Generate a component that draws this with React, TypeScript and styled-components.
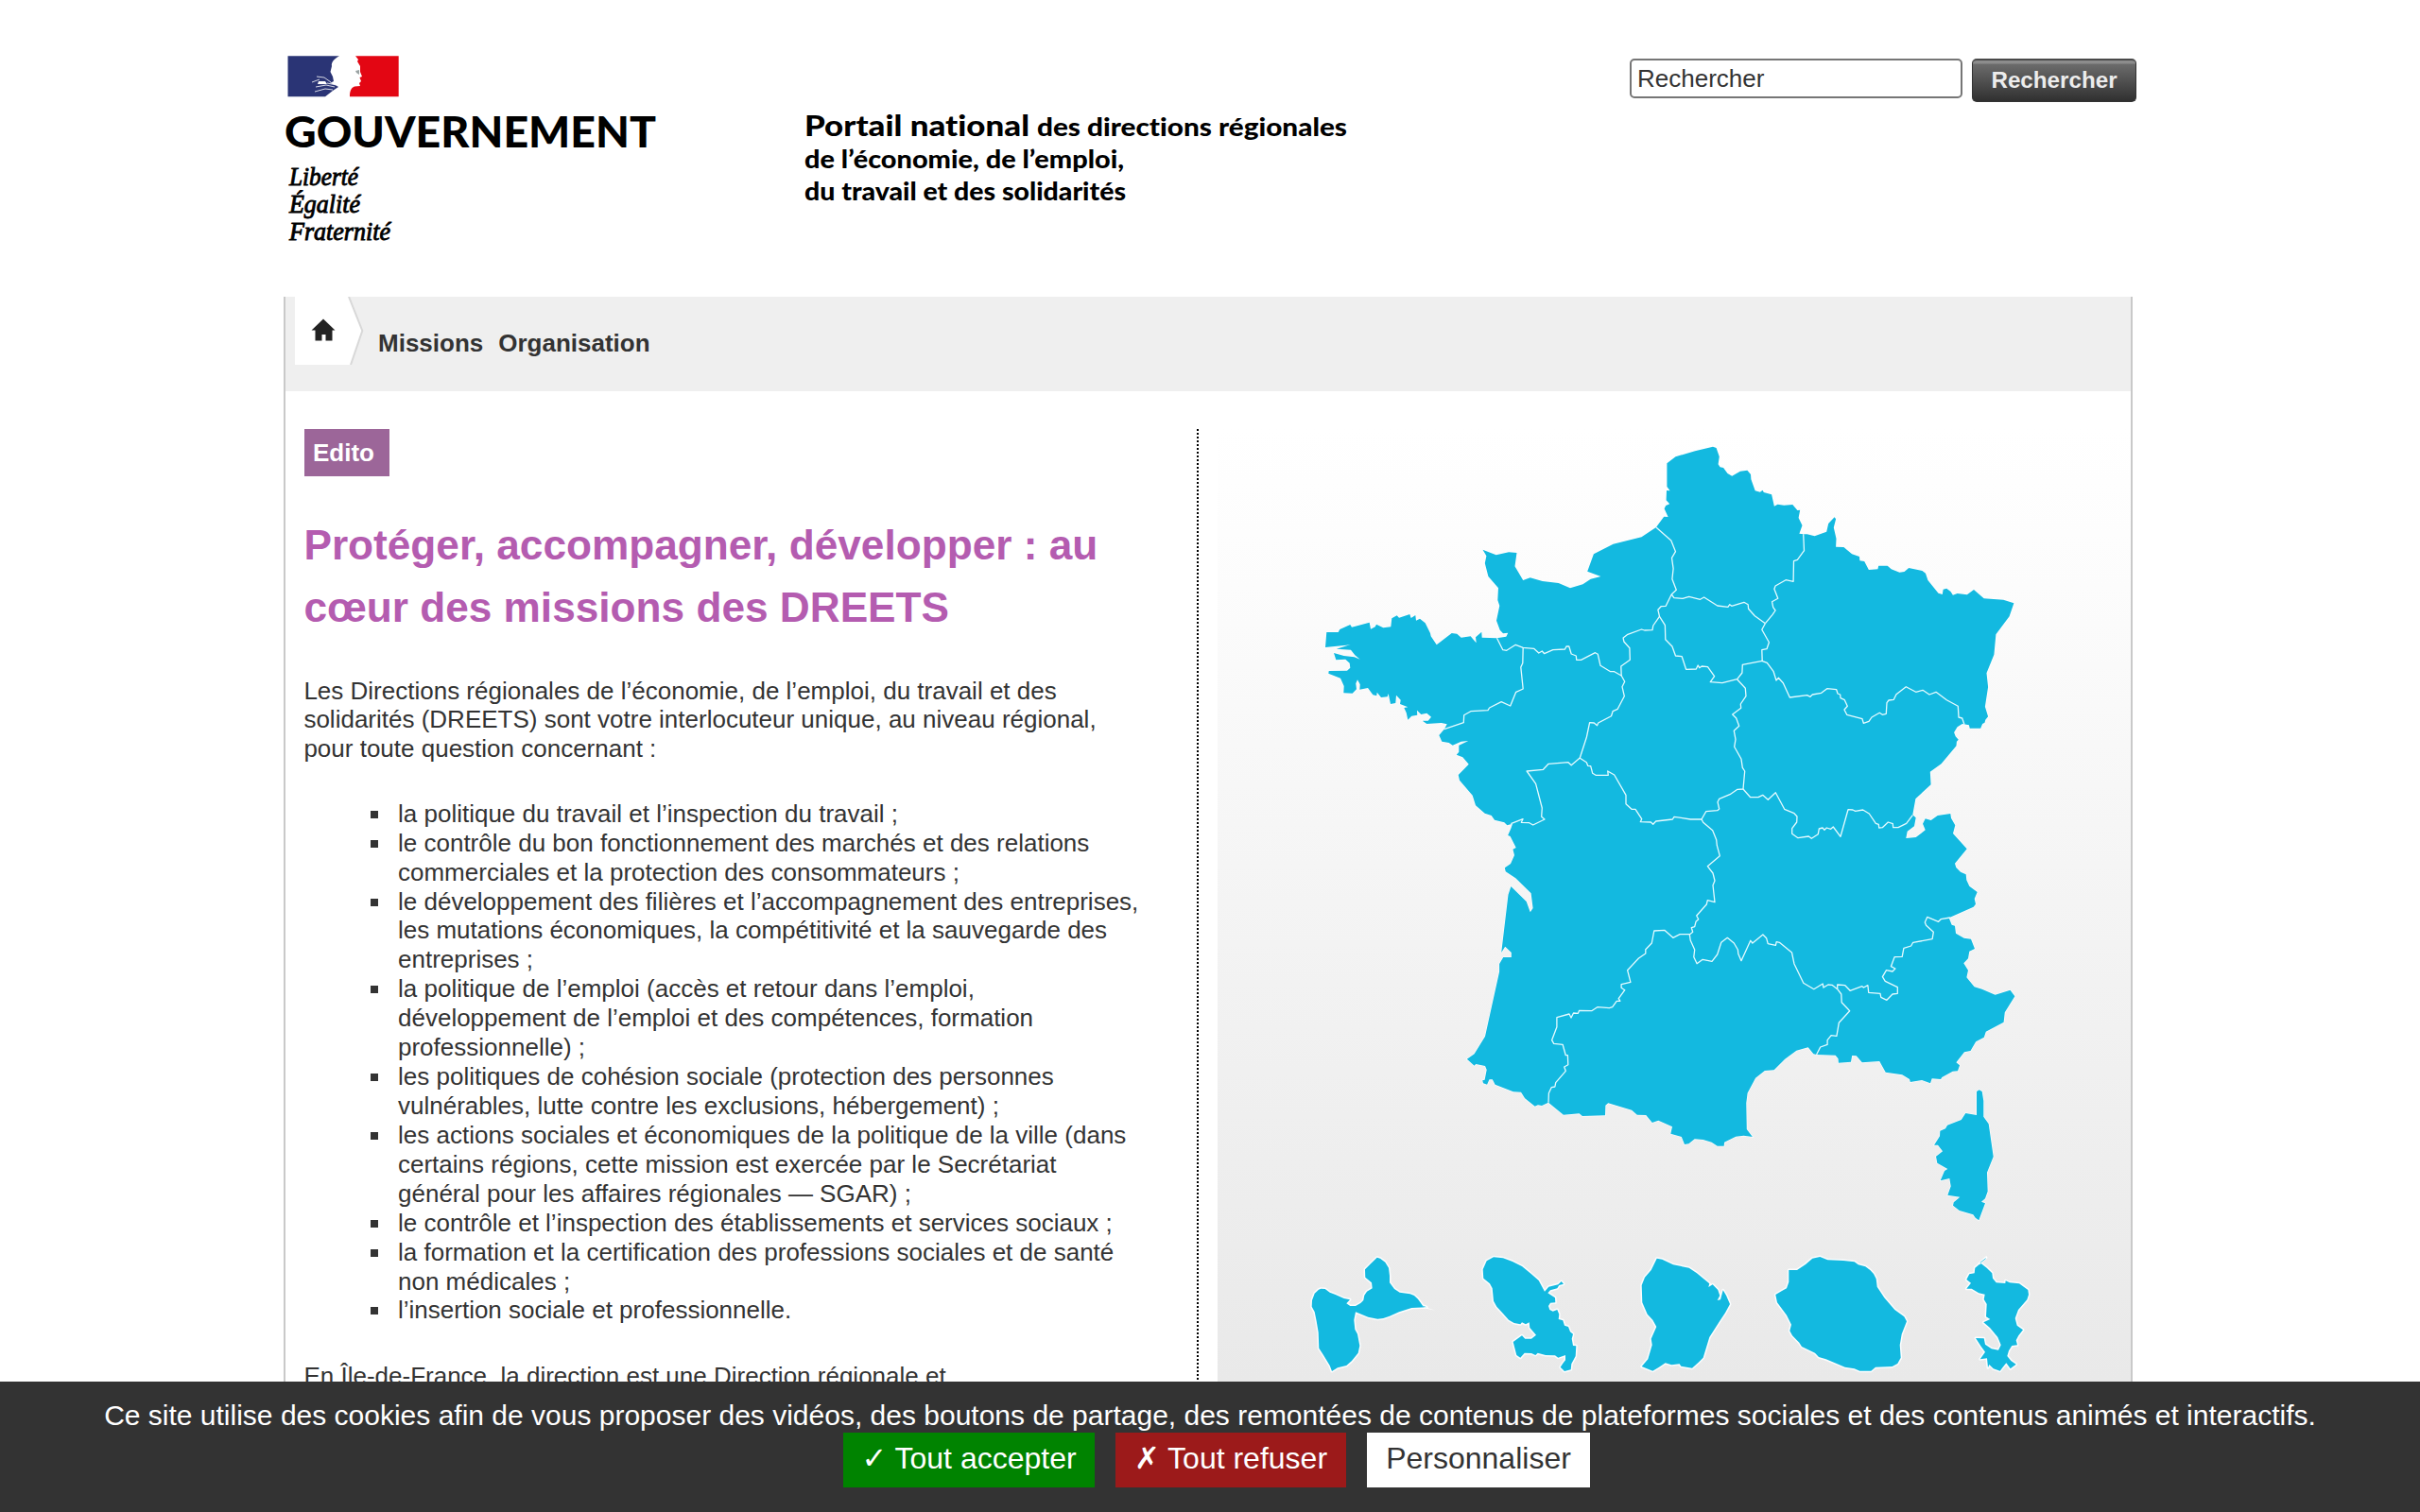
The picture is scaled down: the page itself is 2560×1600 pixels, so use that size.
import React from "react";
import styled, { createGlobalStyle } from "styled-components";

const GlobalStyle = createGlobalStyle`
  html, body { margin: 0; padding: 0; }
  body {
    background: #fff;
    color: #333;
    font-family: "Liberation Sans", Arial, sans-serif;
    font-size: 26px;
    line-height: 30.92px;
    height: 1600px;
    overflow: hidden;
  }
`;

/* ---------- Layout ---------- */

const Container = styled.div`
  width: 1960px;
  height: 1600px;
  margin: 0 auto;
  display: flex;
  flex-direction: column;
  overflow: hidden;
`;

const Header = styled.header`
  display: flex;
  justify-content: space-between;
  align-items: flex-start;
  flex: none;
  height: 314px;
`;

const Brand = styled.svg`
  display: block;
  width: 1160px;
  height: 300px;
`;

const LogoText = styled.text`
  font-family: Lato, sans-serif;
  font-weight: 900;
  font-variant-ligatures: none;
  fill: #000;
`;

const Motto = styled.text`
  font-family: "Liberation Serif", serif;
  font-style: italic;
  font-size: 27px;
  fill: #000;
  stroke: #000;
  stroke-width: 0.9px;
`;

const SearchForm = styled.form`
  display: flex;
  align-items: flex-start;
  gap: 10px;
  padding-top: 62px;
`;

const SearchInput = styled.input`
  box-sizing: border-box;
  width: 352px;
  height: 42px;
  padding: 2px 6px;
  border: 2px solid #767676;
  border-radius: 5px;
  background: #fff;
  color: #333;
  font: 26px "Liberation Sans", Arial, sans-serif;
`;

const SearchButton = styled.button`
  box-sizing: border-box;
  width: 174px;
  height: 46px;
  padding: 0 0 1px;
  border: 1px solid #333;
  border-top: 2px solid #4a4a4a;
  border-radius: 5px;
  background: linear-gradient(#8c8c8c 0, #8c8c8c 3px, #6b6b6b 4px, #303030 100%);
  color: #ececec;
  font: bold 24.2px/36px "Liberation Sans", Arial, sans-serif;
`;

const Page = styled.div`
  box-sizing: border-box;
  width: 1956px;
  flex: 1;
  border: solid #c9c9c9;
  border-width: 0 2px;
  display: flex;
  flex-direction: column;
`;

const Nav = styled.nav`
  display: flex;
  align-items: flex-start;
  height: 100px;
  padding-left: 10px;
  background: #efefef;
  flex: none;
`;

const HomeTab = styled.svg`
  display: block;
  width: 73px;
  height: 72px;
  margin-right: 15px;
`;

const NavLink = styled.a`
  margin: 34px 16px 0 0;
  color: #333;
  font-weight: bold;
  text-decoration: none;
`;

const Columns = styled.main`
  display: flex;
  flex: 1;
  padding-top: 40px;
`;

const Editorial = styled.section`
  box-sizing: border-box;
  width: 966px;
  padding: 0 57px 0 20px;
  border-right: 2px dotted #000;
`;

const Tag = styled.span`
  display: block;
  box-sizing: border-box;
  width: 90px;
  height: 50px;
  padding-left: 9px;
  background: #9c6699;
  color: #fff;
  font-weight: bold;
  line-height: 50px;
`;

const Title = styled.h1`
  margin: 40px 0 39.5px -0.6px;
  color: #b45cb0;
  font-size: 44.2px;
  line-height: 66px;
`;

const Paragraph = styled.p`
  margin: 0 0 0 -0.6px;
`;

const MissionList = styled.ul`
  list-style: none;
  margin: 37.5px 0 39px;
  padding: 0 0 0 70px;
`;

const Mission = styled.li`
  display: flex;
  gap: 21px;

  &::before {
    content: "";
    flex: none;
    width: 8px;
    height: 8px;
    margin-top: 12px;
    background: #333;
  }
`;

const MapPanel = styled.section`
  flex: 1;
  margin-left: 20px;
  background: linear-gradient(#fff 0, #fcfcfc 166px, #f2f2f2 586px, #e9e9e9 1006px);
`;

const MapDrawing = styled.svg`
  display: block;
  width: 966px;
  height: 1010px;
`;

const Land = styled.path`
  fill: #13b9e0;
  stroke: #fff;
  stroke-width: 1.2px;
  paint-order: stroke;
`;

const Island = styled.path`
  fill: #13b9e0;
  stroke: #fbfdfe;
  stroke-width: 3px;
  stroke-linejoin: round;
  paint-order: stroke;
`;

const Border = styled.path`
  fill: none;
  stroke: #e6fbff;
  stroke-width: 1.3px;
  stroke-linejoin: round;
`;

const CookieBar = styled.aside`
  position: fixed;
  left: 0;
  right: 0;
  bottom: 0;
  box-sizing: border-box;
  height: 138px;
  padding-top: 18px;
  display: flex;
  flex-direction: column;
  align-items: center;
  background: #333;
  color: #fff;
`;

const CookieText = styled.span`
  font-size: 30px;
  line-height: 36px;
  white-space: nowrap;
`;

const CookieActions = styled.div`
  display: flex;
  gap: 22px;
  padding-left: 14px;
`;

const CookieButton = styled.button<{ $bg: string; $fg?: string; $w: number }>`
  box-sizing: border-box;
  width: ${(p) => p.$w}px;
  height: 58px;
  padding: 0 0 3px;
  border: 0;
  background: ${(p) => p.$bg};
  color: ${(p) => p.$fg ?? "#fff"};
  font: 32px/55px "Liberation Sans", "DejaVu Sans", sans-serif;
  white-space: nowrap;
`;

/* ---------- Map geometry ---------- */

/* Each sheet has its own origin and scale; it turns its points into map units. */
const sheet = (ox: number, oy: number, kx: number, ky: number) => (pts: string) =>
  pts
    .trim()
    .split(/\s+/)
    .map((p) => {
      const [x, y] = p.split(",").map(Number);
      return `${(ox + x / kx).toFixed(1)} ${(oy + y / ky).toFixed(1)}`;
    })
    .join(" L");

const north = sheet(1540, 450, 2.529, 3);
const west = sheet(1380, 620, 3, 3);
const east = sheet(1740, 620, 3, 3);
const south = sheet(1520, 880, 2.45, 3);
const overseas = sheet(1360, 1300, 3, 3);
const southEast = sheet(1820, 1140, 3, 3);

const path = (...parts: string[]) => "M" + parts.join(" L");

const mainland =
  path(
    north(`536,324 557,290 568,291 558,265 562,255 572,250 563,238 564,207 573,208 565,195 565,121 588,100 640,82 688,68
      697,72 705,100 702,124 707,133 716,135 727,153 739,161 761,146 780,143 789,156 790,172 801,208 814,212 821,206
      824,213 845,220 852,257 861,251 878,254 901,252 914,270 921,269 917,294 927,318 919,344 930,346 940,346 960,352
      992,338 997,312 1013,292 1017,298 1011,325 1018,360 1017,386 1038,387 1060,409 1080,417 1081,430 1093,432
      1105,459 1129,457 1131,446 1155,446 1165,457 1187,467 1200,465 1212,453 1248,462 1257,470 1263,492 1291,533
      1302,537 1304,521 1313,518 1324,528 1330,539 1342,534 1368,538 1386,522 1413,550 1465,554 1493,565 1481,607
      1445,664 1440,728 1420,787 1424,831 1416,893 1424,925 1417,935 1415,944 1409,948 1404,962 1375,962 1373,952
      1355,948 1342,958 1333,975 1337,988 1345,998 1340,1004 1339,1018 1299,1075 1269,1100 1271,1141 1230,1186`),
    east(`850,727 860,736 855,763 833,779 829,801 860,798 890,775 882,755 890,739 908,744 929,729 970,723 972,737
      985,760 978,786 1022,835 984,881 988,894 1002,908 1019,916 1021,934 1030,953 1055,972 1046,993 1050,1010
      1043,1019 965,1054 974,1076 984,1079 987,1103 1013,1118 1035,1121 1047,1152 1030,1160 1026,1183 1012,1198`),
    south(`1366,419 1377,440 1373,463 1393,493 1413,500 1447,518 1486,503 1498,523 1472,574 1469,605 1423,635 1418,653
      1397,667 1383,696 1367,700 1346,733 1355,742 1350,760 1337,761 1309,780 1306,786 1283,784 1279,799 1257,789
      1227,795 1225,786 1206,772 1163,764 1147,729 1102,733 1087,712 1076,711 1073,731 1041,734 1040,721 1033,710
      984,708 976,706 962,685 932,695 902,722 874,757 850,759 826,782 805,830 802,862 803,945 818,969 795,965 775,968
      745,986 744,998 727,998 712,986 690,978 668,976 653,991 642,993 634,969 606,959 610,937 574,917 558,924 542,900
      519,899 505,884 444,862 437,869 436,901 377,903 369,895 328,899 289,860 272,870 262,868 254,872 228,847 218,827
      198,826 151,803 144,787 136,787 130,803 120,799 118,790 124,788 129,756 125,744 101,738 97,743 78,722 97,706
      125,650 162,445 162,420 172,399 193,399 193,384 177,365 167,384 185,200 192,174 232,222 242,256 249,243 244,196
      204,148 178,127 176,115 191,102 201,75 197,56 205,51 190,15 184,12`),
    west(`655,770 660,755 643,760 634,751 603,743 593,729 572,722 543,697 533,665 492,617 488,600 521,566 502,544
      482,536 490,527 490,506 520,492 497,494 470,506 458,498 436,494 427,474 443,455 452,439 434,435 388,438 374,428
      392,428 402,416 388,404 370,408 357,395 358,410 340,413 328,425 323,403 316,387 328,385 303,375 305,362 291,347
      289,372 273,375 266,342 263,352 243,354 230,338 229,349 217,346 201,324 175,329 176,313 168,298 163,310 165,328
      152,341 124,340 125,318 114,293 76,278 77,270 135,269 145,260 143,245 130,233 100,235 93,213 125,222 158,226
      176,233 160,220 147,203 101,200 146,186 133,188 66,195 70,147 107,147 112,138 145,123 150,131 206,116 210,137
      224,130 228,122 250,133 274,130 277,103 293,94 300,101 334,90 338,102 352,93 354,110 366,104 383,118 399,150
      401,160 419,187 467,150 484,152 497,164 527,160 537,172 545,181 543,163 562,146 563,164 610,166 640,161 646,149
      630,151 620,140 609,110 619,63 613,45 615,5`),
    north(`116,520 87,480 78,438 82,415 72,395 108,412 142,403 163,405 158,448 180,492 199,484 232,495 275,501 306,517
      340,505 361,488 388,480 352,464 369,409 421,377 497,355`)
  ) + " Z";

const borders = [
  path(north("536,324 576,366 588,401 578,421 582,455 579,488 590,523 577,537")),
  path(north("577,537 584,548 607,550 624,544 654,553 664,546 700,573 728,577 733,569 738,574 771,562 782,569 783,583 800,605 828,629")),
  path(north("930,346 932,398 914,427 904,431 903,496 883,491 855,510 852,520 862,550 846,560 849,578 855,588 847,602 828,629")),
  path(north("828,629 819,649 838,689 832,710 819,713 820,748")),
  path(north("577,537 562,574 549,575 541,586 545,607 560,635 561,680 579,702 588,732 605,734 616,775 643,774 648,762 652,770 658,765 674,767 692,797 681,815 713,818 753,806 766,786 767,760 820,748")),
  path(north("545,607 528,636 526,650 505,651 497,648 460,664 448,675 450,687 465,707 466,745 442,765 443,795")),
  path(north("110,676 126,713 136,715 160,697 180,706 209,709 222,723 231,717 237,725 260,713 292,711 296,702 303,702 309,726 322,732 323,745 335,745 373,722 380,727 387,763 414,782 424,782 443,795")),
  path(north("180,706 179,755 174,768 180,837 161,847 146,891 122,878 90,897 86,905 40,908 22,920 21,944"), west("443,455")),
  path(north("443,795 452,814 445,830 451,860 433,901 420,908 416,923 381,945 378,953 370,945 358,944 350,990 332,1056")),
  path(north("332,1056 309,1079 301,1070 248,1075 234,1093 190,1098 214,1138 231,1215"), west("752,733 762,741 725,759 713,752 688,751 693,740 655,755")),
  path(
    west("873,546 895,560 899,571 908,572 914,595 924,601 964,601 962,588 983,600 1020,664 1020,692 1038,709 1050,709 1070,740 1066,749 1099,750 1106,757 1115,747 1168,741 1173,733 1225,741"),
    east("180,741")
  ),
  path(east("293,297 319,325 321,350 304,375 305,388 278,408 290,420 299,445 283,460 288,487 284,511 306,550 310,577 317,588 312,645 294,646 270,662 236,676 231,686 236,708 230,713 194,716 180,741")),
  path(east(`371,238 388,244 408,271 417,300 424,292 439,308 460,354 515,347 525,352 532,345 560,340 578,326 608,329
    612,342 620,345 621,356 634,362 643,382 633,393 641,409 690,422 694,436 711,430 720,417 745,403 754,409 766,406
    768,371 774,363 790,361 798,344 829,320 860,337 882,331 903,345 924,337 958,362 994,382 996,417 1007,420 1014,440`)),
  path(east(`312,645 335,671 360,671 374,664 391,679 415,656 443,709 474,722 483,732 482,750 467,770 467,787 486,800
    520,795 529,802 550,788 553,771 564,768 570,775 577,768 590,772 598,765 621,796 645,710 660,711 668,715 692,711
    712,723 733,754 742,757 743,768 754,767 772,750 787,755 788,767 804,767 830,754 850,728`)),
  path(east("180,741 185,751 215,776 227,806 229,824 238,857 199,890 216,912 222,936 216,950 222,1004 199,998 196,1011 164,1047 170,1058 162,1066 158,1082 148,1085 152,1099 142,1107")),
  path(south(`655,326 657,345 668,375 666,398 674,419 689,406 713,412 727,390 737,352 753,337 770,354 780,375 781,388
    789,410 813,346 818,354 845,327 854,338 858,356 878,361 880,350 888,352 920,384 926,420 950,481 977,500 1000,483
    1002,495 1014,486 1024,487 1038,500`)),
  path(south(`655,326 630,326 612,337 590,313 563,315 557,354 541,374 541,387 523,402 494,440 502,478 478,485 478,496
    487,503 471,530 475,538 466,538 455,557 447,560 416,557 401,569 369,568 366,577 354,576 348,591 343,579 311,590
    311,620 298,662 303,673 326,676 334,710 339,710 340,740 330,747 334,760 308,797 306,810 297,812 290,830 289,860`)),
  path(south("1038,500 1048,516 1049,542 1070,569 1042,607 1036,649 1022,647 1012,662 1012,676 994,684 984,708")),
  path(south(`1038,500 1038,486 1058,488 1071,505 1102,491 1106,495 1117,488 1119,511 1149,514 1151,526 1166,535
    1181,516 1194,514 1194,494 1162,475 1155,461 1165,440 1181,444 1188,435 1177,428 1186,398 1206,397 1210,370
    1229,363 1234,352 1284,341 1287,319 1268,298 1265,288 1271,271 1300,286 1306,278 1330,273`)),
];

const corsica = path(southEast(`813,45 821,40 830,45 835,75 835,125 851,148 866,252 846,302 848,362 840,385 828,395
  840,400 820,454 809,446 802,436 758,423 738,407 740,397 760,380 721,374 731,346 727,321 698,328 711,297 721,291
  688,272 684,251 705,235 690,215 678,215 696,187 697,170 714,163 720,152 764,135 778,114 813,120`)) + " Z";

const islands = [
  // Guadeloupe
  path(overseas(`105,194 112,191 125,192 140,203 158,210 185,222 204,226 193,238 205,246 222,246 238,237 247,228 250,212 258,200
    275,190 273,172 253,155 252,130 270,112 290,92 300,95 316,107 327,125 330,150 330,172 345,192 362,203 395,208 408,213 420,224
    435,245 448,250 400,252 360,265 330,278 310,285 292,287 262,281 222,265 217,290 220,320 228,335 235,372 230,395
    210,420 193,435 165,442 147,453 140,435 120,402 106,380 104,330 98,295 92,265 83,248 84,228 92,206`)) + " Z",
  // Martinique
  path(overseas(`660,91 690,94 720,105 750,120 780,145 803,165 822,200 835,185 865,178 875,168 882,176 868,180 862,190 840,196
    832,205 855,220 856,235 840,236 834,246 838,258 848,263 862,258 868,272 866,288 880,292 885,308 897,312 903,328 912,335
    908,350 912,372 922,373 920,405 907,430 905,448 885,453 872,440 880,428 888,418 888,402 865,410 855,403 825,402 800,395
    793,402 780,396 758,395 745,410 733,402 722,360 750,340 760,350 780,350 795,338 775,315 773,298 762,304 750,298 745,304 725,300
    708,290 690,270 670,248 660,230 656,190 648,175 628,158 626,130 638,103`)) + " Z",
  // Guyane
  path(overseas(`1178,95 1195,98 1230,115 1280,125 1305,142 1345,175 1342,186 1355,178 1372,195 1378,213 1370,228
    1380,226 1388,196 1398,212 1410,240 1395,268 1380,290 1345,345 1325,410 1310,425 1290,443 1255,437 1250,430
    1225,433 1205,427 1185,440 1165,452 1130,438 1150,415 1163,370 1160,350 1177,312 1165,290 1148,272 1132,235
    1130,180 1140,155 1160,132`)) + " Z",
  // La Réunion
  path(southEast(`217,612 243,612 270,594 292,575 316,570 340,580 390,582 425,586 437,595 460,601 475,612 486,624 494,640 497,665
    520,700 553,738 583,760 591,775 575,815 569,850 572,890 562,909 545,918 492,920 478,932 442,932 425,925 395,920
    335,895 312,888 300,875 258,855 250,842 228,820 220,805 225,785 210,755 180,715 175,690 195,678 210,670 217,650`)) + " Z",
  // Mayotte
  path(southEast(`826,590 845,605 862,622 864,638 875,652 904,654 905,646 918,652 948,655 976,675 978,690 973,706 945,738 935,765
    941,788 960,802 946,820 938,835 942,850 925,852 915,868 910,885 922,900 938,911 920,925 907,907 896,920 887,932
    866,925 853,912 849,922 846,892 824,895 840,872 826,853 810,828 836,829 840,848 860,862 882,866 890,850 880,825
    855,795 835,778 856,768 843,760 845,720 836,705 839,689 820,685 797,671 781,671 795,653 781,642 790,625 806,622
    808,605`)) + " Z",
];

/* ---------- Content ---------- */

const missions = [
  "la politique du travail et l’inspection du travail ;",
  "le contrôle du bon fonctionnement des marchés et des relations commerciales et la protection des consommateurs ;",
  "le développement des filières et l’accompagnement des entreprises, les mutations économiques, la compétitivité et la sauvegarde des entreprises ;",
  "la politique de l’emploi (accès et retour dans l’emploi, développement de l’emploi et des compétences, formation professionnelle) ;",
  "les politiques de cohésion sociale (protection des personnes vulnérables, lutte contre les exclusions, hébergement) ;",
  "les actions sociales et économiques de la politique de la ville (dans certains régions, cette mission est exercée par le Secrétariat général pour les affaires régionales — SGAR) ;",
  "le contrôle et l’inspection des établissements et services sociaux ;",
  "la formation et la certification des professions sociales et de santé non médicales ;",
  "l’insertion sociale et professionnelle.",
];

function BrandBlock() {
  return (
    <Brand viewBox="300 0 1160 300" role="img" aria-label="Gouvernement">
      <path fill="#2a3475" d="M304.5 59.3H359C354 62 350 66 351 70L349.5 76L352 81L353 86L349 88L355 90L358 92L352 96L344 102.3H304.5Z" />
      <path fill="#e30613" d="M376 59.3H421.7V102.3H370C370 97 371 93 375 91.5L381 91L380 88L382 86L380.5 82L383 81L381 76L381 70L378 65L379 63Z" />
      <path fill="none" stroke="#fff" strokeWidth="0.8" d="M335 81L343 82L350 87M330 87L338 84M346 88L356 90M334 92L345 90L354 92M333 97L344 94L352 95" />
      <path fill="#fff" d="M337 86L344 86L346 89L336 89Z" />
      <path fill="#9aa3a3" d="M376 75L380 74L380 79L377 77Z" />
      <LogoText x="301" y="155.9" fontSize="46" textLength="393" lengthAdjust="spacingAndGlyphs">GOUVERNEMENT</LogoText>
      <Motto x="306" y="195.5" textLength="73" lengthAdjust="spacingAndGlyphs">Liberté</Motto>
      <Motto x="306" y="225.2" textLength="75" lengthAdjust="spacingAndGlyphs">Égalité</Motto>
      <Motto x="306" y="254.2" textLength="107" lengthAdjust="spacingAndGlyphs">Fraternité</Motto>
      <LogoText x="851" y="144" fontSize="30" textLength="238" lengthAdjust="spacingAndGlyphs">Portail national</LogoText>
      <LogoText x="1097" y="144" fontSize="26.5" textLength="328" lengthAdjust="spacingAndGlyphs">des directions régionales</LogoText>
      <LogoText x="851" y="178.3" fontSize="26" textLength="338" lengthAdjust="spacingAndGlyphs">de l’économie, de l’emploi,</LogoText>
      <LogoText x="851" y="212" fontSize="26" textLength="340" lengthAdjust="spacingAndGlyphs">du travail et des solidarités</LogoText>
    </Brand>
  );
}

function HomeLink() {
  return (
    <HomeTab viewBox="0 0 73 72">
      <path fill="#fff" d="M0 0H57L71 36L59 72H0Z" />
      <path fill="none" stroke="#d8d8d8" strokeWidth="2" d="M57 0L71.3 36L59 72" />
      <path fill="#222" d="M30 23.5L42.5 35.5H39.5V46.5H32.5V40H28.5V46.5H21.5V35.5H17.5Z" />
    </HomeTab>
  );
}

export default function App() {
  return (
    <>
      <GlobalStyle />
      <Container>
        <Header>
          <BrandBlock />
          <SearchForm onSubmit={(e) => e.preventDefault()}>
            <SearchInput defaultValue="Rechercher" />
            <SearchButton>Rechercher</SearchButton>
          </SearchForm>
        </Header>
        <Page>
          <Nav>
            <HomeLink />
            <NavLink>Missions</NavLink>
            <NavLink>Organisation</NavLink>
          </Nav>
          <Columns>
            <Editorial>
              <Tag>Edito</Tag>
              <Title>Protéger, accompagner, développer : au cœur des missions des DREETS</Title>
              <Paragraph>
                Les Directions régionales de l’économie, de l’emploi, du travail et des solidarités (DREETS) sont votre
                interlocuteur unique, au niveau régional, pour toute question concernant :
              </Paragraph>
              <MissionList>
                {missions.map((m) => (
                  <Mission key={m}>
                    <span>{m}</span>
                  </Mission>
                ))}
              </MissionList>
              <Paragraph>En Île-de-France, la direction est une Direction régionale et</Paragraph>
            </Editorial>
            <MapPanel>
              <MapDrawing viewBox="1288 454 966 1010">
                <Land d={mainland} />
                {borders.map((d) => (
                  <Border key={d} d={d} />
                ))}
                <Land d={corsica} />
                {islands.map((d) => (
                  <Island key={d} d={d} />
                ))}
                <path d={path(overseas("432,246 475,260 450,255"))} fill="#fff" />
                <path d={path(southEast("820,592 846,570"))} stroke="#fff" strokeWidth="2.4" />
                <path d={path(southEast("824,589 842,575"))} stroke="#13b9e0" strokeWidth="0.8" />
              </MapDrawing>
            </MapPanel>
          </Columns>
        </Page>
      </Container>
      <CookieBar>
        <CookieText>
          Ce site utilise des cookies afin de vous proposer des vidéos, des boutons de partage, des remontées de contenus
          de plateformes sociales et des contenus animés et interactifs.
        </CookieText>
        <CookieActions>
          <CookieButton $bg="#008300" $w={266}>✓ Tout accepter</CookieButton>
          <CookieButton $bg="#9c1a1a" $w={244}>✗ Tout refuser</CookieButton>
          <CookieButton $bg="#fff" $fg="#333" $w={236}>Personnaliser</CookieButton>
        </CookieActions>
      </CookieBar>
    </>
  );
}
